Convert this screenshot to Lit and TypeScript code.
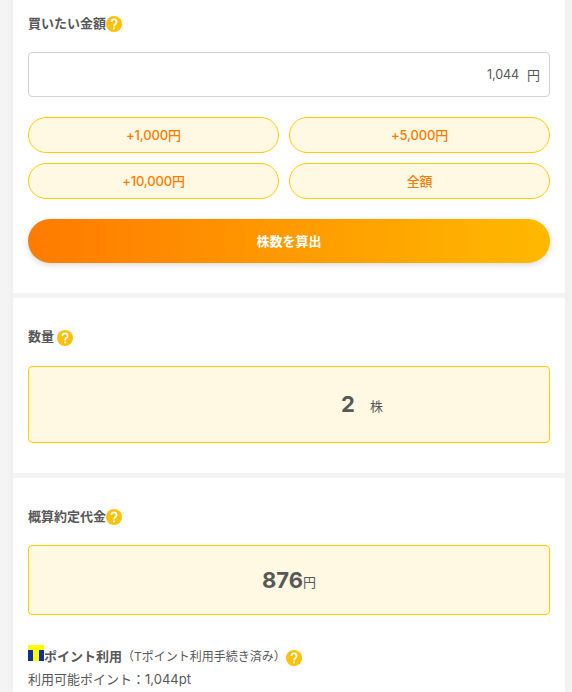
import { LitElement, html, css } from "lit";
import { customElement } from "lit/decorators.js";

@customElement("help-icon")
class HelpIcon extends LitElement {
  static styles = css`
    :host { display: block; width: 16px; height: 16px; flex: none; }
    svg { display: block; }
  `;
  render() {
    return html`<svg width="16" height="16" viewBox="0 0 16 16">
      <circle cx="8" cy="8" r="8" fill="#ffc107" />
      <path d="M5.4 6C5.4 4.3 6.4 3.4 8 3.4s2.6 1 2.6 2.5c0 2-2.6 2.2-2.6 4.5" fill="none" stroke="#fff" stroke-width="1.8" />
      <rect x="7.1" y="11.5" width="1.8" height="1.8" fill="#fff" />
    </svg>`;
  }
}

@customElement("app-root")
class AppRoot extends LitElement {
  static styles = css`
    :host {
      display: block; box-sizing: border-box; height: 692px; overflow: hidden;
      padding: 0 7px 0 13px; background: #f4f4f4; color: #585858;
      font: 13px/20px Inter, "Noto Sans CJK JP", sans-serif;
    }
    * { box-sizing: border-box; }
    .page { height: 692px; display: flex; flex-direction: column; gap: 5px; box-shadow: 0 0 8px rgba(0,0,0,.05); background: #f4f4f4; }
    section { background: #fff; padding: 0 15px; flex: none; }
    .amount { height: 293px; padding-top: 13px; }
    .quantity { height: 175px; padding-top: 28px; }
    .total { flex: 1; padding-top: 28px; }
    .title { display: flex; height: 20px; font-weight: 700; }
    .title help-icon { margin-top: 3px; }
    .quantity help-icon { margin: 4px 0 0 3px; }
    .input {
      margin-top: 19px; height: 45px; border: 1px solid #d2d2d2; border-radius: 4px;
      display: flex; align-items: center; justify-content: flex-end; gap: 8px; padding-right: 9px;
    }
    .digits { font-size: 12.6px; letter-spacing: -0.15px; }
    .presets { margin-top: 20px; display: grid; grid-template-columns: 251px 261px; gap: 10px; grid-auto-rows: 36px; }
    button { font: inherit; padding: 0; display: flex; align-items: center; justify-content: center; }
    .preset { border: 1px solid #fc0; border-radius: 18px; background: #fff9e3; color: #ff7b00; font-weight: 500; letter-spacing: -0.15px; }
    .submit {
      width: 100%; height: 44px; margin-top: 20px; border: 0; border-radius: 22px; color: #fff; font-weight: 700;
      background: linear-gradient(90deg, #ff7b00, #ffb900); box-shadow: 0 2px 6px rgba(0,0,0,.15);
    }
    .result { border: 1px solid #fc0; border-radius: 4px; background: #fff9e3; display: flex; justify-content: center; }
    .result b { font-size: 22px; line-height: 30px; }
    .shares { margin-top: 20px; height: 77px; padding: 22px 0 0 146px; gap: 15px; }
    .shares span { margin-top: 7px; }
    .yen { margin-top: 19px; height: 70px; padding-top: 19px; }
    .yen span { margin-top: 7px; }
    .points { margin-top: 30px; display: flex; height: 23px; }
    .points svg { flex: none; }
    .points .name { font-weight: 700; margin-top: 1px; }
    .points .note { font-size: 12px; margin-top: 2px; }
    .points help-icon { margin: 5px 0 0; }
    .balance { line-height: 23px; }
  `;
  render() {
    return html`<main class="page">
      <section class="amount">
        <div class="title"><span>買いたい金額</span><help-icon></help-icon></div>
        <div class="input"><span class="digits">1,044</span><span>円</span></div>
        <div class="presets">
          ${["+1,000円", "+5,000円", "+10,000円", "全額"].map((t) => html`<button class="preset">${t}</button>`)}
        </div>
        <button class="submit">株数を算出</button>
      </section>
      <section class="quantity">
        <div class="title"><span>数量</span><help-icon></help-icon></div>
        <div class="result shares"><b>2</b><span>株</span></div>
      </section>
      <section class="total">
        <div class="title"><span>概算約定代金</span><help-icon></help-icon></div>
        <div class="result yen"><b>876</b><span>円</span></div>
        <div class="points">
          <svg width="16" height="16" viewBox="0 0 16 16"><path fill="#ff0" d="M0 0h16v16H0z" /><path fill="#0d319c" d="M0 5h5v11H0zM11 5h5v11h-5z" /></svg>
          <span class="name">ポイント利用</span><span class="note">（Tポイント利用手続き済み）</span><help-icon></help-icon>
        </div>
        <div class="balance">利用可能ポイント：1,044pt</div>
      </section>
    </main>`;
  }
}
